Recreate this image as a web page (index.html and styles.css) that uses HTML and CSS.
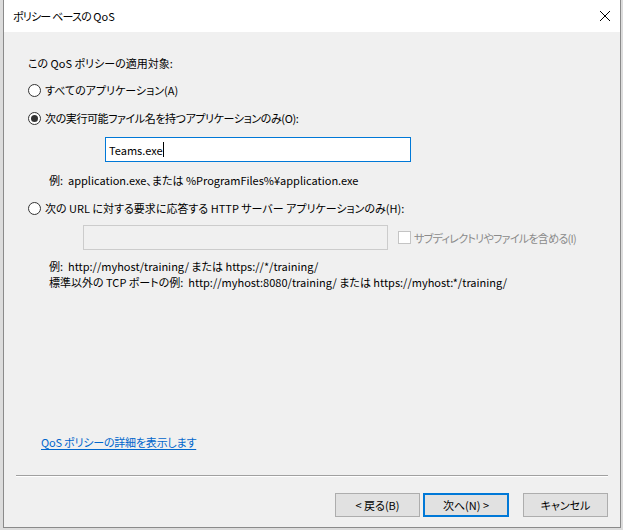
FILE: index.html
```html
<!DOCTYPE html>
<html lang="ja">
<head>
<meta charset="utf-8">
<title>ポリシー ベースの QoS</title>
<link rel="stylesheet" href="styles.css">
</head>
<body>
<div class="window">
  <div class="titlebar">
    <span class="title"><span class="title-jp">ポリシー ベースの</span> QoS</span>
    <svg class="close" width="12" height="12" viewBox="0 0 12 12"><path d="M1 1 L11 11 M11 1 L1 11" stroke="#000" stroke-width="1" fill="none"/></svg>
  </div>
  <div class="content">
    <div class="main">
      <div class="row heading">この QoS ポリシーの適用対象:</div>
      <div class="row radio-row r1"><span class="radio"></span><span>すべてのアプリケーション(A)</span></div>
      <div class="row radio-row r2"><span class="radio checked"></span><span class="tight">次の実行可能ファイル名を持つアプリケーションのみ(O):</span></div>
      <div class="textbox active"><span>Teams.exe</span><span class="caret"></span></div>
      <div class="row example ex1">例:&nbsp; application.exe、または %ProgramFiles%¥application.exe</div>
      <div class="row radio-row r3"><span class="radio"></span><span>次の URL に対する要求に応答する HTTP サーバー アプリケーションのみ(H):</span></div>
      <div class="url-row">
        <div class="textbox disabled"></div>
        <div class="check"><span class="box"></span><span class="tight">サブディレクトリやファイルを含める(I)</span></div>
      </div>
      <div class="row example ex2">例:&nbsp; http://myhost/training/ または https://*/training/</div>
      <div class="row example">標準以外の TCP ポートの例:&nbsp; http://myhost:8080/training/ または https://myhost:*/training/</div>
    </div>
    <div class="row link-row"><a class="link" href="#">QoS ポリシーの詳細を表示します</a></div>
    <div class="separator"></div>
    <div class="buttons">
      <button class="btn">&lt; 戻る(B)</button>
      <button class="btn default">次へ(N) &gt;</button>
      <button class="btn cancel">キャンセル</button>
    </div>
  </div>
</div>
</body>
</html>
```
FILE: styles.css
```css
* { box-sizing: border-box; }
html, body { margin: 0; padding: 0; }
body {
  width: 623px;
  height: 530px;
  background: #dcdcdc;
  font-family: "Noto Sans CJK JP", "Noto Sans", sans-serif;
  font-size: 11px;
  font-feature-settings: "palt";
  color: #000;
  overflow: hidden;
}
.window {
  margin-left: 3px;
  width: 618px;
  height: 528px;
  border: 1px solid #8a8a8a;
  border-top: none;
  background: #f0f0f0;
  display: flex;
  flex-direction: column;
}
.titlebar {
  height: 32px;
  background: #fff;
  display: flex;
  align-items: center;
  justify-content: space-between;
  padding: 0 9px 1px 9px;
}
.title { line-height: 16px; white-space: nowrap; }
.title-jp { letter-spacing: -0.8px; }
.close { display: block; }
.content {
  flex: 1;
  display: flex;
  flex-direction: column;
}
.main { padding-left: 24px; }
.row { height: 16px; line-height: 16px; white-space: nowrap; }
.tight { letter-spacing: -0.4px; }
.heading { margin-top: 23px; }
.radio-row { display: flex; align-items: center; gap: 4px; }
.r1 { margin-top: 11px; }
.r2 { margin-top: 12px; }
.r3 { margin-top: 12px; }
.radio {
  width: 13px; height: 13px;
  border: 1px solid #333;
  border-radius: 50%;
  background: #fff;
  position: relative;
  flex: none;
}
.radio.checked::after {
  content: "";
  position: absolute;
  left: 2px; top: 2px;
  width: 7px; height: 7px;
  border-radius: 50%;
  background: #333;
}
.textbox {
  height: 25px;
  border: 1px solid #7a7a7a;
  background: #fff;
}
.textbox.active {
  margin-top: 11px;
  margin-left: 77px;
  width: 306px;
  border-color: #0078d7;
  display: flex;
  align-items: center;
  padding-left: 3px;
  line-height: 16px;
}
.caret {
  width: 1px; height: 15px; background: #000;
}
.example { padding-left: 21px; }
.ex1 { margin-top: 10px; }
.url-row {
  margin-top: 9px;
  margin-left: 55px;
  display: flex;
  align-items: center;
  gap: 10px;
}
.textbox.disabled {
  width: 305px;
  background: #f0f0f0;
  border-color: #cccccc;
}
.check {
  display: flex; align-items: center; gap: 3px;
  color: #8b8b8b;
  line-height: 16px;
  white-space: nowrap;
}
.check .tight { letter-spacing: -0.7px; }
.box {
  width: 13px; height: 13px;
  border: 1px solid #c4c4c4;
  background: #fff;
  flex: none;
}
.ex2 { margin-top: 8px; }
.link-row { margin-top: auto; padding-left: 37px; }
.link { color: #0066cc; text-decoration: underline; text-underline-offset: 2px; letter-spacing: -0.2px; }
.separator {
  margin: 25px 12px 0 12px;
  background: #a0a0a0;
  border-bottom: 1px solid #fff;
  height: 2px;
}
.buttons {
  display: flex;
  justify-content: flex-end;
  padding: 16px 12px 10px 0;
  gap: 3px;
}
.btn {
  width: 85px; height: 24px;
  font: inherit;
  font-feature-settings: "palt";
  background: #e1e1e1;
  border: 1px solid #adadad;
  color: #000;
  padding: 0;
  line-height: 16px;
}
.btn.default { border: 2px solid #0078d7; width: 86px; }
.btn.cancel { margin-left: 11px; }
```
